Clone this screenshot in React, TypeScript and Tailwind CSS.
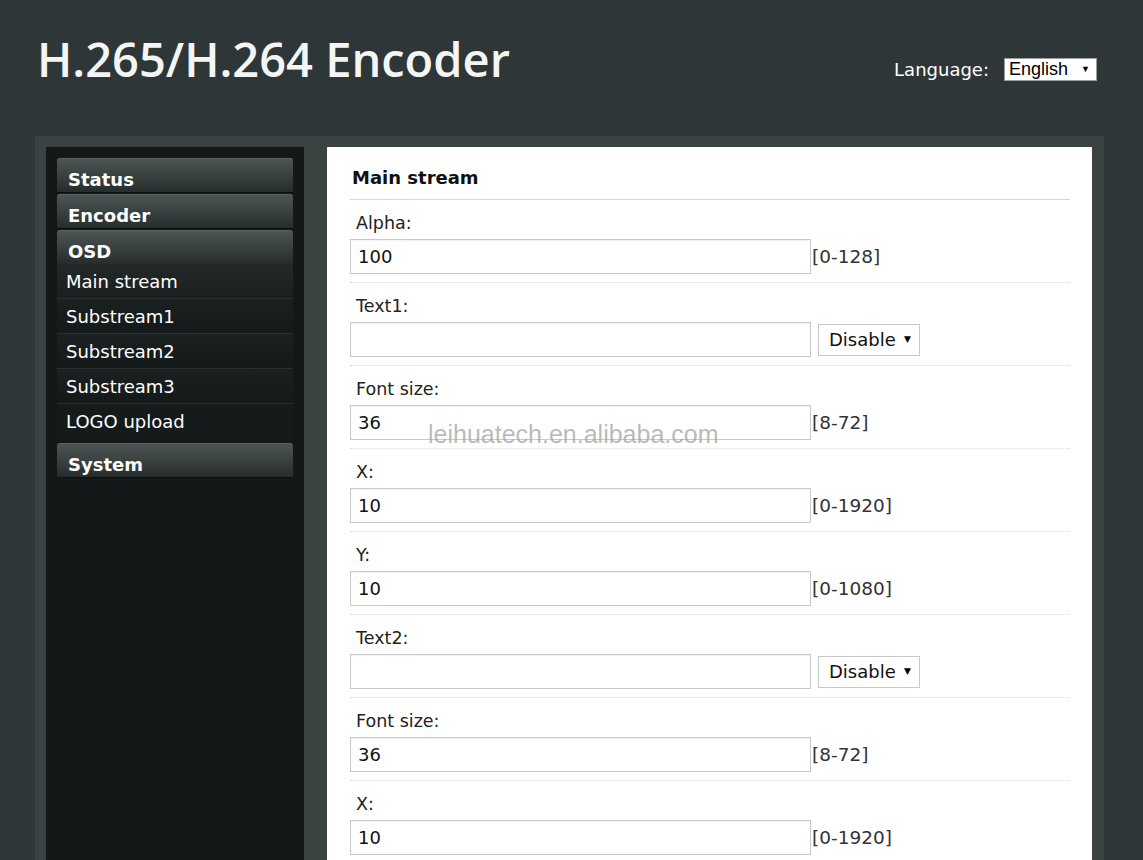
import React from "react";

const MENU_HEAD =
  "h-[34px] rounded-t-[3px] border-t border-[#5d6564] bg-gradient-to-b from-[#4d5554] via-[#3a4241] to-[#262c2c] pl-[11px] pt-[8px] text-[18px] font-bold leading-[26px] text-white shadow-[0_1px_0_#0b0f0f]";

interface Field {
  label: string;
  value?: string;
  range?: string;
  select?: boolean;
}

const FIELDS: Field[] = [
  { label: "Alpha:", value: "100", range: "[0-128]" },
  { label: "Text1:", select: true },
  { label: "Font size:", value: "36", range: "[8-72]" },
  { label: "X:", value: "10", range: "[0-1920]" },
  { label: "Y:", value: "10", range: "[0-1080]" },
  { label: "Text2:", select: true },
  { label: "Font size:", value: "36", range: "[8-72]" },
  { label: "X:", value: "10", range: "[0-1920]" },
];

const SUB_ITEMS = ["Main stream", "Substream1", "Substream2", "Substream3", "LOGO upload"];

function Caret() {
  return <span className="ml-auto text-[9px] leading-none text-black">▼</span>;
}

export default function App() {
  return (
    <div
      className="relative h-[860px] w-[1143px] overflow-hidden bg-[#2f3637]"
      style={{ fontFamily: '"DejaVu Sans", Verdana, sans-serif' }}
    >
      {/* Header */}
      <div className="flex h-[136px] items-start justify-between pl-[37px] pr-[46px]">
        <h1
          className="pt-[27px] text-[47px] font-semibold leading-[64px] text-[#f4f6f6]"
          style={{ fontFamily: '"Open Sans", sans-serif' }}
        >
          H.265/H.264 Encoder
        </h1>
        <div className="flex items-center gap-[15px] pt-[56px]">
          <span className="text-[18px] text-white">Language:</span>
          <div
            className="flex h-[23px] w-[93px] items-center border border-[#9aa0a0] bg-white pl-[4px] pr-[6px] text-[18px] text-black"
            style={{ fontFamily: '"Liberation Sans", Arial, sans-serif' }}
          >
            English
            <Caret />
          </div>
        </div>
      </div>

      {/* Body */}
      <div className="ml-[35px] flex w-[1069px] gap-[23px] bg-[#3a4342] p-[11px] pr-[12px]">
        {/* Sidebar */}
        <div className="h-[720px] w-[258px] shrink-0 bg-[#131818] p-[11px]">
          <div className="flex flex-col gap-[2px]">
            <div className={MENU_HEAD}>Status</div>
            <div className={MENU_HEAD}>Encoder</div>
            <div className={MENU_HEAD}>OSD</div>
          </div>
          <div className="flex flex-col">
            {SUB_ITEMS.map((item, i) => (
              <div
                key={item}
                className={`h-[35px] border-b border-[#2b3131] pl-[9px] pt-[5px] text-[18px] leading-[26px] text-white ${
                  i === 0
                    ? "bg-gradient-to-b from-[#232929] to-[#1a1f1f]"
                    : i === SUB_ITEMS.length - 1
                      ? "border-b-0 bg-[#151a1a]"
                      : "bg-gradient-to-b from-[#1b2020] to-[#141919]"
                }`}
              >
                {item}
              </div>
            ))}
          </div>
          <div className={`${MENU_HEAD} mt-[4px] h-[33px] overflow-hidden`}>System</div>
        </div>

        {/* Main panel */}
        <div className="w-[765px] bg-white px-[22px] pl-[23px] pt-[19px] text-[#111]">
          <div className="border-b border-[#d6d6d6] pb-[9px] pl-[2px] text-[18px] font-bold leading-[24px]">
            Main stream
          </div>
          {FIELDS.map((f, i) => (
            <div key={i} className="border-b border-dotted border-[#dcdcdc] pb-[8px] pt-[12px]">
              <div className="pl-[6px] text-[17.5px] leading-[22px] text-[#222]">{f.label}</div>
              <div className="mt-[5px] flex items-center">
                <div className="flex h-[35px] w-[461px] items-center border border-[#c9c9c9] bg-white pl-[7px] text-[18px] text-[#111] shadow-[inset_0_1px_1px_rgba(0,0,0,0.06)]">
                  {f.value ?? ""}
                </div>
                {f.range && <span className="ml-[1px] text-[18.5px] text-[#333]">{f.range}</span>}
                {f.select && (
                  <div className="ml-[7px] flex h-[32px] w-[102px] items-center border border-[#c9c9c9] bg-white pl-[10px] pr-[8px] text-[18px] text-[#111]">
                    Disable
                    <Caret />
                  </div>
                )}
              </div>
            </div>
          ))}
        </div>
      </div>

      {/* Watermark */}
      <div
        className="pointer-events-none absolute left-[428px] top-[416px] text-[25px] text-[#9c9c9c]/70"
        style={{ fontFamily: '"Liberation Sans", Arial, sans-serif' }}
      >
        leihuatech.en.alibaba.com
      </div>
    </div>
  );
}
